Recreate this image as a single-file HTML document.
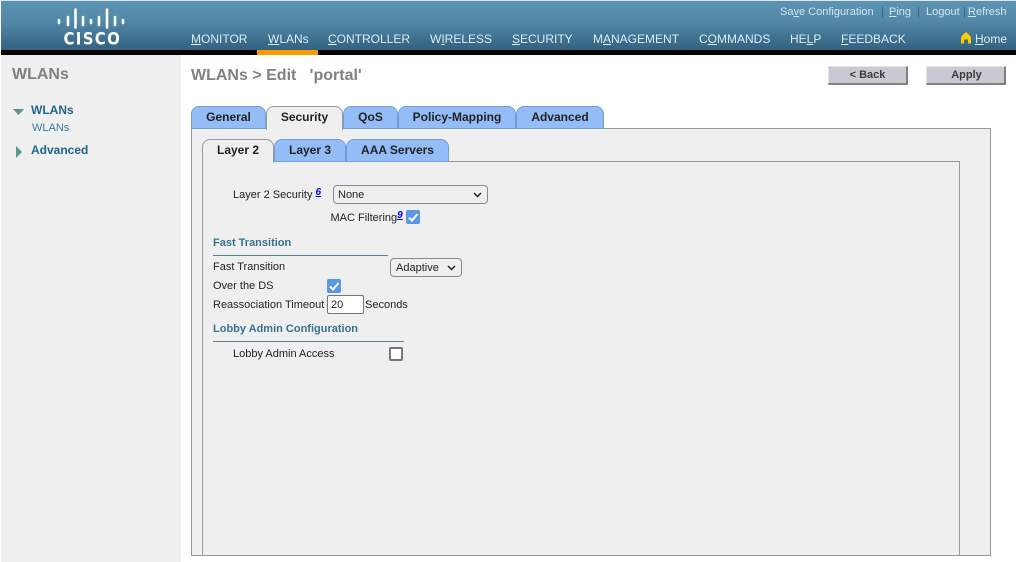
<!DOCTYPE html>
<html><head><meta charset="utf-8">
<style>
*{box-sizing:border-box}
html,body{margin:0;padding:0;width:1016px;height:562px;overflow:hidden;background:#fff;font-family:"Liberation Sans",sans-serif}
.a{position:absolute;white-space:nowrap}
#hdr{position:absolute;left:1px;top:1px;width:1015px;height:49px;background:linear-gradient(#5b93b3 0,#5389a9 40%,#32627f 100%)}
#top0{position:absolute;left:0;top:0;width:1016px;height:1px;background:#e3e3e3}
#blk{position:absolute;left:1px;top:50px;width:1015px;height:5px;background:#000}
#org{position:absolute;left:257px;top:50px;width:61px;height:5px;background:#f90}
.n{position:absolute;top:32px;font-size:12px;line-height:14px;color:#dcecf5;white-space:nowrap}
.n u{text-decoration:underline}
.t{position:absolute;top:6px;font-size:11px;line-height:13px;color:#d5e6ef;white-space:nowrap}
#side{position:absolute;left:1px;top:55px;width:180px;height:507px;background:#efefef}
.tab{position:absolute;height:23px;border:1px solid #6f9fd8;border-radius:8px 8px 0 0;background:#94bdf8;font-size:12px;font-weight:bold;color:#222;text-align:center;line-height:20px}
.tab.on{background:#efefef;border-color:#999;border-bottom:0;z-index:3;color:#222}
.l{position:absolute;font-size:11px;line-height:13px;color:#222;white-space:nowrap}
.h{position:absolute;font-size:11px;line-height:13px;font-weight:bold;color:#3a718f;white-space:nowrap}
.hr{position:absolute;height:1px;background:#5f7f93}
.btn{position:absolute;top:66px;width:80px;height:19px;background:#c8cad3;border:1px solid;border-color:#e2e3e8 #808080 #808080 #e2e3e8;border-width:1px 2px 2px 1px;font-size:11px;font-weight:bold;color:#3c3c3c;text-align:center;line-height:17px}
.sel{position:absolute;background:#efefef;border:1px solid #8a8a8a;border-radius:4px;font-size:11px;line-height:18px;color:#222;padding-left:4px}
.cb{position:absolute;width:14px;height:14px;background:#5a97e8;border-radius:2px}
sup.f{position:relative;top:-3px;vertical-align:baseline;color:#00e;font-weight:bold;font-style:italic;font-size:10px;line-height:10px;text-decoration:underline}
</style></head><body>
<div id="top0"></div>
<div id="hdr"></div>
<div id="blk"></div>
<div id="org"></div>

<svg class="a" style="left:50px;top:0" width="80" height="32" viewBox="0 0 80 32">
<g stroke="#fff" stroke-width="2.600" stroke-linecap="round" fill="none">
<path d="M9 20v3M18 17v8M25.500 9.500v18M33 17v8M41 20v3M49 17v8M57 9.500v18M65 17v8M73 20v3"/>
</g></svg>
<div class="a" style="left:63.500px;top:31px;font-family:'DejaVu Sans',sans-serif;font-size:15px;line-height:19px;font-weight:bold;color:#fff;letter-spacing:1.300px;transform:scaleY(1.120);transform-origin:0 100%">CISCO</div>

<div class="n" style="left:191px"><u>M</u>ONITOR</div>
<div class="n" style="left:268px"><u>W</u>LANs</div>
<div class="n" style="left:328px"><u>C</u>ONTROLLER</div>
<div class="n" style="left:430px">W<u>I</u>RELESS</div>
<div class="n" style="left:512px"><u>S</u>ECURITY</div>
<div class="n" style="left:593px">M<u>A</u>NAGEMENT</div>
<div class="n" style="left:699px">C<u>O</u>MMANDS</div>
<div class="n" style="left:790px">HE<u>L</u>P</div>
<div class="n" style="left:841px"><u>F</u>EEDBACK</div>
<svg class="a" style="left:960px;top:31px" width="12" height="13" viewBox="0 0 12 13"><path d="M6 1C7 2 11 5 11 7V12.500H8V8.500H4V12.500H1V7C1 5 5 2 6 1z" fill="#fc0"/></svg>
<div class="n" style="left:975px"><u>H</u>ome</div>

<div class="t" style="left:780px">Sa<u>v</u>e Configuration</div>
<div class="t" style="left:881px;color:#2f5f8f">|</div>
<div class="t" style="left:889px"><u>P</u>ing</div>
<div class="t" style="left:917px;color:#2f5f8f">|</div>
<div class="t" style="left:926px">Logout</div>
<div class="t" style="left:963px;color:#2f5f8f">|</div>
<div class="t" style="left:968px"><u>R</u>efresh</div>

<div id="side"></div>
<div class="a" style="left:12px;top:66px;font-size:16px;line-height:18px;font-weight:bold;color:#808080">WLANs</div>
<svg class="a" style="left:13px;top:109px" width="11" height="7"><path d="M0 0H11L5.500 6z" fill="#5f9392"/></svg>
<div class="a" style="left:31px;top:103px;font-size:12px;line-height:14px;font-weight:bold;color:#22648a">WLANs</div>
<div class="a" style="left:32px;top:122px;font-size:11px;line-height:13px;color:#3a7aa0">WLANs</div>
<svg class="a" style="left:16px;top:146px" width="7" height="12"><path d="M0 0L6 6L0 12z" fill="#5f9392"/></svg>
<div class="a" style="left:31px;top:143px;font-size:12px;line-height:14px;font-weight:bold;color:#22648a">Advanced</div>

<div class="a" style="left:191px;top:66px;font-size:16px;line-height:19px;font-weight:bold;color:#808080;white-space:pre">WLANs &gt; Edit   'portal'</div>
<div class="btn" style="left:828px">&lt; Back</div>
<div class="btn" style="left:926px"><span style="position:relative;left:1px">Apply</span></div>

<div class="a" style="left:191px;top:128px;width:800px;height:428px;background:#efefef;border:1px solid #999"></div>
<div class="tab" style="left:191px;top:106px;width:75px">General</div>
<div class="tab on" style="left:266px;top:106px;width:77px;height:24px">Security</div>
<div class="tab" style="left:343px;top:106px;width:55px">QoS</div>
<div class="tab" style="left:398px;top:106px;width:118px">Policy-Mapping</div>
<div class="tab" style="left:516px;top:106px;width:88px">Advanced</div>

<div class="a" style="left:202px;top:161px;width:758px;height:395px;border:1px solid #999;background:#efefef"></div>
<div class="tab on" style="left:202px;top:139px;width:72px;height:24px">Layer 2</div>
<div class="tab" style="left:274px;top:139px;width:72px">Layer 3</div>
<div class="tab" style="left:346px;top:139px;width:103px">AAA Servers</div>

<div class="l" style="left:233px;top:189px">Layer 2 Security <sup class="f">6</sup></div>
<div class="sel" style="left:333px;top:185px;width:155px;height:19px">None</div>
<svg class="a" style="left:473px;top:192px" width="9" height="6"><path d="M1 1L4.500 4.500L8 1" stroke="#222" stroke-width="1.500" fill="none"/></svg>
<div class="l" style="left:330.500px;top:212px">MAC Filtering<sup class="f">9</sup></div>
<div class="cb" style="left:406px;top:210px"></div>
<svg class="a" style="left:406px;top:210px" width="14" height="14"><path d="M3 7.500L6 10.500L11.500 4" stroke="#fff" stroke-width="2" fill="none"/></svg>

<div class="h" style="left:213px;top:237px">Fast Transition</div>
<div class="hr" style="left:213px;top:255px;width:175px"></div>
<div class="l" style="left:213px;top:261px">Fast Transition</div>
<div class="sel" style="left:390px;top:258px;width:72px;height:19px;padding-left:5px">Adaptive</div>
<svg class="a" style="left:447px;top:265px" width="9" height="6"><path d="M1 1L4.500 4.500L8 1" stroke="#222" stroke-width="1.500" fill="none"/></svg>
<div class="l" style="left:213px;top:280px">Over the DS</div>
<div class="cb" style="left:327px;top:279px"></div>
<svg class="a" style="left:327px;top:279px" width="14" height="14"><path d="M3 7.500L6 10.500L11.500 4" stroke="#fff" stroke-width="2" fill="none"/></svg>
<div class="l" style="left:213px;top:299px">Reassociation Timeout</div>
<div class="a" style="left:327px;top:295px;width:37px;height:19px;background:#fff;border:1px solid #767676;border-radius:2px;font-size:11px;line-height:18px;color:#222;padding-left:3px">20</div>
<div class="l" style="left:365px;top:299px">Seconds</div>

<div class="h" style="left:213px;top:323px">Lobby Admin Configuration</div>
<div class="hr" style="left:213px;top:341px;width:191px"></div>
<div class="l" style="left:233px;top:348px">Lobby Admin Access</div>
<div class="a" style="left:389px;top:347px;width:14px;height:14px;background:#fff;border:2px solid #767676;border-radius:2px"></div>
</body></html>
